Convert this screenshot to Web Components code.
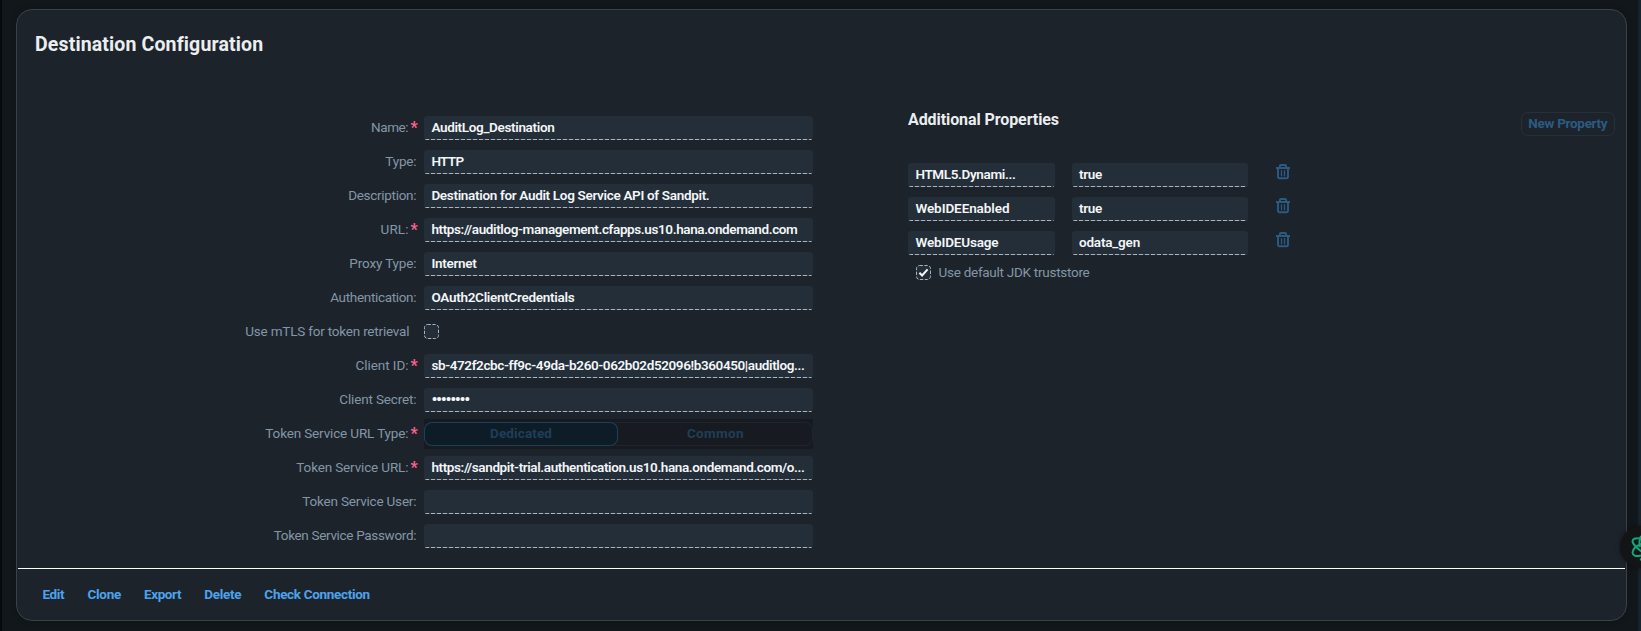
<!DOCTYPE html>
<html lang="en"><head><meta charset="utf-8"><title>Destination Configuration</title>
<style>html,body{margin:0;height:100%;overflow:hidden;background:#12171b}body{font-family:Roboto,"Noto Sans",sans-serif}</style></head>
<body>
<dest-page></dest-page>
<script>
const define=(name,html,after)=>{
  const t=document.createElement('template');t.innerHTML=html;
  customElements.define(name,class extends HTMLElement{
    connectedCallback(){
      if(!this.shadowRoot)this.attachShadow({mode:'open'}).append(t.content.cloneNode(true));
      if(after)after(this,this.shadowRoot);
    }
  });
};

/* Text whose tracking is set so that it spans the width in its "w" attribute */
define('fit-text','<style>:host{display:inline-block;white-space:nowrap}span{display:inline-block}</style><span><slot></slot></span>',(el,root)=>{
  const w=+el.getAttribute('w'),s=root.querySelector('span'),n=el.textContent.length;
  const r=s.getBoundingClientRect().width;
  const ls=(w-r)/n;
  s.style.letterSpacing=ls.toFixed(3)+'px';
  s.style.marginRight=(-ls).toFixed(3)+'px';
});

define('read-field',`<style>
:host{display:block;box-sizing:border-box;height:24px;border-radius:3px;background:#242e38;padding:0 0 0 7.4px;position:relative;font-size:13.5px;line-height:22px;font-weight:600;color:#f3f6f8;overflow:hidden}
i{display:block;position:absolute;left:1px;right:1px;bottom:0;height:1px;background:repeating-linear-gradient(90deg,#a9b4be 0 4px,#3a4550 4px 6px)}
</style><slot></slot><i></i>`);

define('check-box',`<style>
:host{display:block;width:15px;height:15px;color:#f5f6f7}
svg{display:block}.tick{display:none}:host([checked]) .tick{display:block}
</style><svg width="15" height="15" viewBox="0 0 15 15" fill="none"><rect x=".5" y=".5" width="14" height="14" rx="3" fill="#242e38" stroke="#a9b4be" stroke-dasharray="3.4 1.5"/><path class="tick" d="M3.4 7.8 6.1 10.4 11.6 4.4" stroke="currentColor" stroke-width="2.1"/></svg>`);

define('trash-icon',`<style>:host{display:block;width:14px;height:16px;color:#2b5b83}svg{display:block}</style>
<svg width="14" height="16" viewBox="0 0 14 16" fill="none" stroke="currentColor" stroke-width="1.9"><path d="M0 4h14M3.9 3.400V2Q3.900 1 5 1h4Q10.100 1 10.100 2v1.400M2 4v9q0 1.200 1.200 1.200h7.600q1.200 0 1.200-1.200V4"/><path d="M5.500 6.200v6M8.500 6.200v6" stroke-width="1.300"/></svg>`);

define('form-row',`<style>
:host{display:grid;grid-template-columns:399.5px 389px;column-gap:7.5px;height:34px;align-items:start}
.l{display:flex;justify-content:flex-end;font-size:13.5px;line-height:22px;color:#8396a8}
b{display:none;color:#ff5f8f;font-size:16px;line-height:24px;width:7px;margin-left:2px;text-align:center;margin-right:-1px}
:host([required]) b{display:block}
:host([check]) .l{padding-right:7px}
</style><div class="l"><slot name="label"></slot><b>*</b></div><slot></slot>`);

define('seg-button',`<style>
:host{display:block;background:#171b21;height:30px;margin-top:-3px;padding:3px 0;box-sizing:border-box}
.g{display:flex;height:24px;box-sizing:border-box;box-shadow:inset 0 0 0 1px #1e252b;border-radius:8px}
.g>div{flex:0 0 50%;text-align:center;font-size:13.5px;line-height:22px;font-weight:700;color:#203e58;border-radius:8px}
.g>.on{background:#0e1c27;box-shadow:inset 0 0 0 1px #1d4058;flex-basis:194px}
</style><div class="g"><div class="on"><fit-text w="62">Dedicated</fit-text></div><div><fit-text w="57">Common</fit-text></div></div>`);

define('prop-row',`<style>
:host{display:grid;grid-template-columns:147px 176px 14px;height:34px;align-items:start}
:host{column-gap:17px}trash-icon{margin:1px 0 0 11px}
</style><read-field><slot name="key"></slot></read-field><read-field style="padding-left:7px"><slot name="value"></slot></read-field><trash-icon></trash-icon>`);

define('chat-badge',`<style>:host{display:block;position:fixed;left:1620px;top:526px;width:42px;height:42px;border-radius:50%;background:#131415;box-shadow:0 0 5px #0006}svg{display:block}</style>
<svg width="42" height="42" viewBox="0 0 42 42" fill="none" stroke="#12a67a" stroke-width="2"><path d="M19.500 12.500Q12.500 11.500 12.500 15.500 13 19 22 26M21.500 18Q13 21 12.500 26.500 13 31.500 21 29.500M20 21Q18.500 16 21 10M20 33l2 1"/></svg>`);

define('dest-page',`<style>
:host{display:block;box-sizing:border-box;height:631px;padding:9px 14px 9px 16px;border-left:0;background:linear-gradient(90deg,#08090a 2px,#12171b 2px,#12171b 1638px,#18222a 1638px)}
.card{box-sizing:border-box;width:1611px;height:612px;border:1px solid #3c4145;border-radius:16px;background:#1d232a;display:flex;flex-direction:column;box-shadow:0 0 6px #0003}
h1{margin:0;font-size:19.5px;line-height:24px;font-weight:700;color:#ebeef0;padding:23px 0 0 18px;height:59px;box-sizing:content-box}
.body{display:grid;grid-template-columns:799px 1fr;column-gap:92px;flex:1;padding-top:24px}
.head{display:flex;justify-content:space-between;height:51px;padding-right:11px;margin-top:-4px}
h2{margin:0;font-size:16px;line-height:15px;font-weight:700;color:#ebeef0}
.new{box-sizing:border-box;width:94px;height:24px;border:1px solid #26303a;border-radius:7px;font-size:13.5px;line-height:21px;font-weight:700;color:#2b5b83;text-align:center}
.jdk{display:flex;padding-left:8px;gap:7.5px;font-size:13.5px;line-height:15px;color:#8396a8}
footer{height:52px;border-top:1px solid #fff;margin:0 1px;display:flex;padding-left:24.4px;gap:22.8px;font-size:13.5px;line-height:50px;font-weight:700;color:#4ba3ee;box-sizing:border-box}
</style>
<div class="card"><h1><fit-text w="228">Destination Configuration</fit-text></h1>
<div class="body"><div class="f">
<form-row required><fit-text slot="label" w="37">Name:</fit-text><read-field><fit-text w="123">AuditLog_Destination</fit-text></read-field></form-row>
<form-row><fit-text slot="label" w="31">Type:</fit-text><read-field><fit-text w="32">HTTP</fit-text></read-field></form-row>
<form-row><fit-text slot="label" w="68">Description:</fit-text><read-field><fit-text w="278">Destination for Audit Log Service API of Sandpit.</fit-text></read-field></form-row>
<form-row required><fit-text slot="label" w="28">URL:</fit-text><read-field><fit-text w="366">https://auditlog-management.cfapps.us10.hana.ondemand.com</fit-text></read-field></form-row>
<form-row><fit-text slot="label" w="67">Proxy Type:</fit-text><read-field><fit-text w="45">Internet</fit-text></read-field></form-row>
<form-row><fit-text slot="label" w="86">Authentication:</fit-text><read-field><fit-text w="143">OAuth2ClientCredentials</fit-text></read-field></form-row>
<form-row check><fit-text slot="label" w="164">Use mTLS for token retrieval</fit-text><check-box style="margin-top:4px"></check-box></form-row>
<form-row required><fit-text slot="label" w="53">Client ID:</fit-text><read-field><fit-text w="373">sb-472f2cbc-ff9c-49da-b260-062b02d52096!b360450|auditlog...</fit-text></read-field></form-row>
<form-row><fit-text slot="label" w="77">Client Secret:</fit-text><read-field><fit-text w="37.5" style="font-size:17px">••••••••</fit-text></read-field></form-row>
<form-row required><fit-text slot="label" w="143">Token Service URL Type:</fit-text><seg-button></seg-button></form-row>
<form-row required><fit-text slot="label" w="112">Token Service URL:</fit-text><read-field><fit-text w="373">https://sandpit-trial.authentication.us10.hana.ondemand.com/o...</fit-text></read-field></form-row>
<form-row><fit-text slot="label" w="114">Token Service User:</fit-text><read-field></read-field></form-row>
<form-row><fit-text slot="label" w="142.500">Token Service Password:</fit-text><read-field></read-field></form-row>
</div><div class="r">
<div class="head"><h2><fit-text w="151">Additional Properties</fit-text></h2><div class="new"><fit-text w="79">New Property</fit-text></div></div>
<prop-row><fit-text slot="key" w="100">HTML5.Dynami...</fit-text><fit-text slot="value" w="23">true</fit-text></prop-row>
<prop-row><fit-text slot="key" w="94">WebIDEEnabled</fit-text><fit-text slot="value" w="23">true</fit-text></prop-row>
<prop-row><fit-text slot="key" w="83">WebIDEUsage</fit-text><fit-text slot="value" w="61">odata_gen</fit-text></prop-row>
<div class="jdk"><check-box checked></check-box><fit-text w="151">Use default JDK truststore</fit-text></div>
</div></div>
<footer><fit-text w="22">Edit</fit-text><fit-text w="33.5">Clone</fit-text><fit-text w="37">Export</fit-text><fit-text w="37">Delete</fit-text><fit-text w="105.5">Check Connection</fit-text></footer>
</div><chat-badge></chat-badge>`);
</script></body></html>
